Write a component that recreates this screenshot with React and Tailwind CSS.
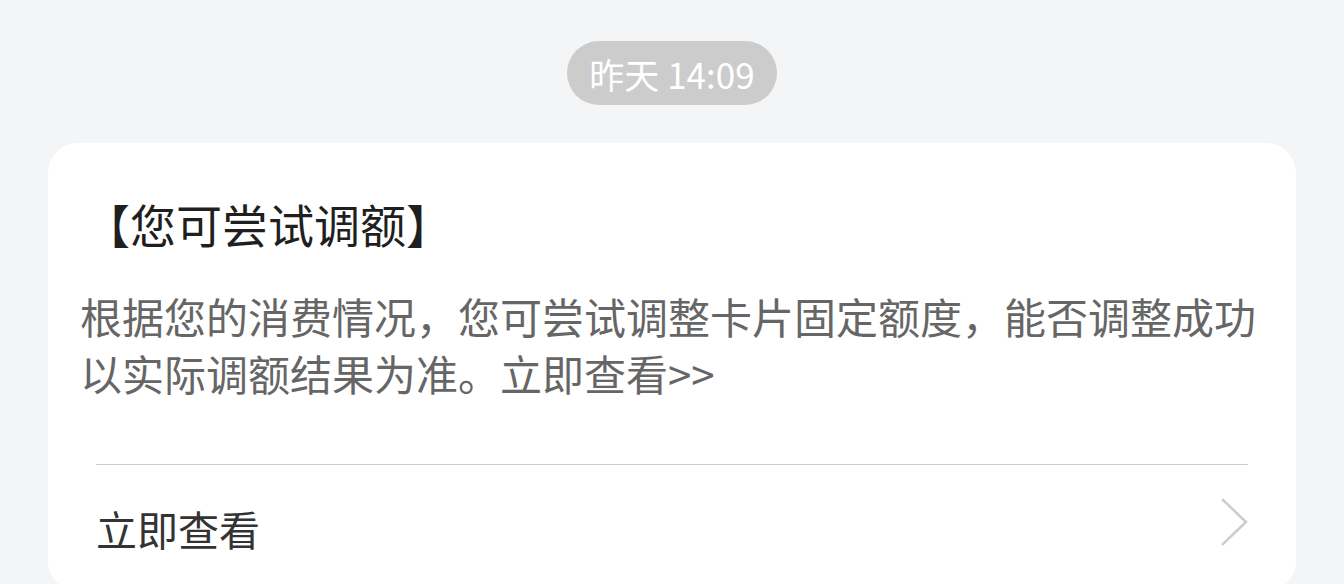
export default function App() {
  return (
    <div
      className="w-[1344px] h-[584px] overflow-hidden bg-[#f4f5f7] flex flex-col items-center"
      style={{ fontFamily: '"Noto Sans CJK SC", "Noto Sans", sans-serif' }}
    >
      <div className="shrink-0 mt-[41px] h-[64px] px-[22px] rounded-full bg-[#cccccc] flex items-center text-white text-[35px] leading-none">
        昨天 14:09
      </div>
      <div className="mt-[38px] w-[1248px] bg-white rounded-[30px] px-8 pt-[50px] shrink-0">
        <div className="text-[46px] leading-[60px] text-[#1f1f1f] ml-[4px]">【您可尝试调额】</div>
        <div className="mt-[34px] text-[42px] leading-[57px] text-[#666666]">
          根据您的消费情况，您可尝试调整卡片固定额度，能否调整成功以实际调额结果为准。立即查看&gt;&gt;
        </div>
        <div className="mt-[63px] mx-4 border-t border-[#cccccc]"></div>
        <div className="mx-4 h-[126px] flex items-center justify-between">
          <span className="text-[41px] text-[#333333] leading-none">立即查看</span>
          <svg width="28" height="48" viewBox="0 0 28 48" fill="none" className="mr-[-1px] mb-[12px]">
            <path d="M2 2 L25 24 L2 46" stroke="#cccccc" strokeWidth="2.5" strokeLinecap="square" />
          </svg>
        </div>
      </div>
    </div>
  );
}
